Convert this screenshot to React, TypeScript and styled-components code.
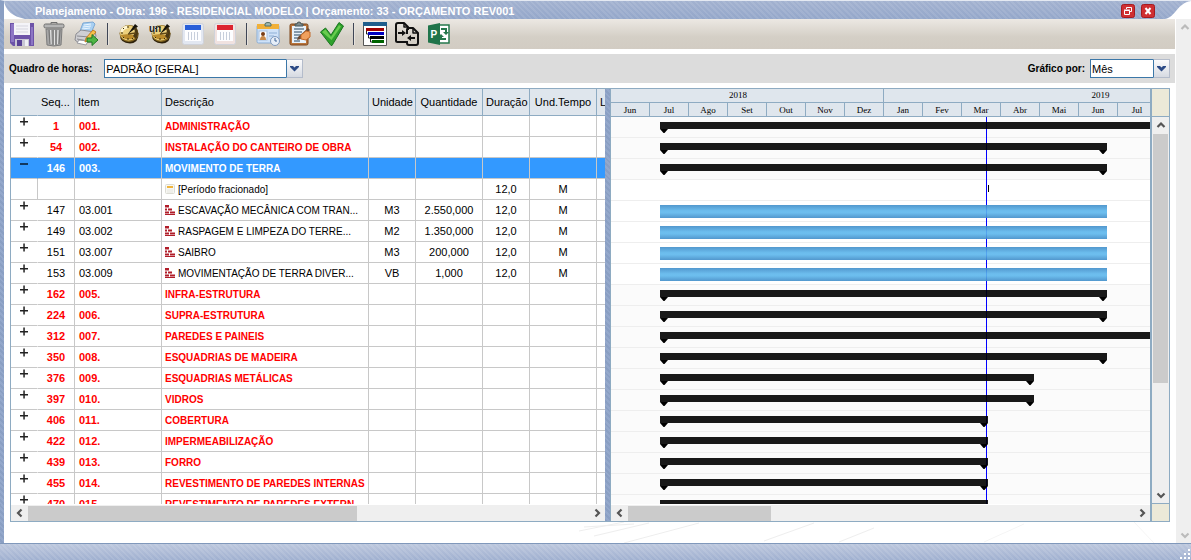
import React from "react";
import styled, { createGlobalStyle, css } from "styled-components";

const line = "#8eabc2";
const headerBg = "#dfe6ed";
const rule = "#c8c8c8";
const stripes = "repeating-linear-gradient(45deg, #8a9fc3 0 2px, #94a8cb 2px 4px)";

const Global = createGlobalStyle`
  * { box-sizing: border-box; }
  html, body { margin: 0; background: #fff; }
  body { font-family: "Liberation Sans", Arial, sans-serif; font-size: 11px; color: #000; }
  button { font: inherit; padding: 0; border: 0; background: none; cursor: pointer; }
  svg { display: block; }
`;

const Window = styled.div`
  display: flex;
  flex-direction: column;
  height: 100vh;
  min-height: 320px;
  overflow: hidden;
  background: #fff;
`;

const TitleBar = styled.header`
  flex: none;
  display: flex;
  align-items: stretch;
  height: 19px;
  border-top: 1px solid #e4e9f2;
  border-left: 4px solid #8a9fc3;
  background: repeating-linear-gradient(45deg, rgba(255, 255, 255, 0.09) 0 2px, transparent 2px 4px),
    linear-gradient(#a3b2d0, #94a7ca);
`;

const Title = styled.h1`
  flex: 1;
  margin: 0;
  padding: 2px 0 0 6px;
  font-size: 11px;
  line-height: 16px;
  font-weight: bold;
  color: #fff;
  white-space: nowrap;
`;

const WindowButtons = styled.div`
  display: flex;
  gap: 6px;
  padding: 3px 10px 0 0;
`;

const WindowButton = styled.button`
  width: 14px;
  height: 14px;
`;

const Main = styled.div`
  flex: 1;
  display: flex;
  min-height: 0;
  border-style: solid;
  border-width: 0 0 0 4px;
  border-image: ${stripes} 4;
`;

const Content = styled.main`
  position: relative;
  flex: 1;
  display: flex;
  flex-direction: column;
  min-width: 0;
  margin-right: 1px;
`;

const Toolbar = styled.div`
  flex: none;
  display: flex;
  align-items: center;
  height: 30px;
  padding-left: 2px;
  background: linear-gradient(#ece8e3, #d4cfc6 60%, #d2ccc3);
`;

const ToolButton = styled.button`
  display: flex;
  align-items: center;
  justify-content: center;
  width: 32px;
  height: 30px;
`;

const Separator = styled.span`
  width: 2px;
  height: 22px;
  margin: 0 4px 0 5px;
  background: linear-gradient(90deg, #3f4656 50%, #e6e2dc 50%);
`;

const FilterBar = styled.div`
  flex: none;
  display: flex;
  align-items: center;
  justify-content: space-between;
  height: 29px;
  margin-top: 5px;
  padding: 0 5px;
  background: #dcdcdc;
`;

const Field = styled.label`
  display: flex;
  align-items: center;
  gap: 12px;
  font-size: 10px;
  font-weight: bold;
`;

const ShortField = styled(Field)`
  gap: 5px;
`;

const Combo = styled.span<{ $width: number }>`
  display: grid;
  width: ${(p) => p.$width}px;
  height: 19px;
  > * { grid-area: 1 / 1; }
`;

const Select = styled.select`
  appearance: none;
  width: 100%;
  height: 19px;
  margin: 0;
  padding: 0 18px 0 1px;
  border: 1px solid #3b77a8;
  border-radius: 0;
  background: #fff;
  font-family: "Liberation Sans", Arial, sans-serif;
  font-size: 11px;
  color: #000;
`;

const ComboArrow = styled.span`
  justify-self: end;
  display: flex;
  align-items: center;
  justify-content: center;
  width: 17px;
  height: 19px;
  border: 1px solid #b4bccb;
  border-left-color: #3b77a8;
  background: linear-gradient(#fbfbfc, #d6dae2);
  pointer-events: none;
`;

const Workspace = styled.section`
  flex: 1;
  display: flex;
  min-height: 0;
  margin: 5px 5px 21px 6px;
  border: 1px solid ${line};
`;

const GridPane = styled.div`
  flex: none;
  display: flex;
  flex-direction: column;
  width: 594px;
  background: #fff;
`;

const Clip = styled.div`
  position: relative;
  flex: 1;
  min-height: 0;
  overflow: hidden;
`;

const Table = styled.table`
  width: 653px;
  table-layout: fixed;
  border-collapse: separate;
  border-spacing: 0;
`;

const Head = styled.th<{ $left?: boolean; $plain?: boolean }>`
  height: 27px;
  padding: 0 3px 1px;
  border-right: 1px solid ${(p) => (p.$plain ? headerBg : line)};
  border-bottom: 1px solid ${line};
  background: ${headerBg};
  font-size: 11px;
  font-weight: normal;
  text-align: ${(p) => (p.$left ? "left" : "center")};
  white-space: nowrap;
  overflow: hidden;
`;

type Kind = "group" | "selected" | "part" | "item";

const Row = styled.tr<{ $kind: Kind }>`
  ${(p) => p.$kind === "group" && css`color: #f00; font-weight: bold;`}
  ${(p) => p.$kind === "selected" && css`color: #fff; font-weight: bold; background: #39f;`}
`;

const Cell = styled.td<{ $left?: boolean; $plain?: boolean }>`
  height: 21px;
  padding: 0 3px 0 ${(p) => (p.$left ? 4 : 3)}px;
  border-right: 1px solid ${(p) => (p.$plain ? "transparent" : rule)};
  border-bottom: 1px solid ${rule};
  font-size: 11px;
  line-height: 20px;
  text-align: ${(p) => (p.$left ? "left" : "center")};
  white-space: nowrap;
  overflow: hidden;
`;

const NameCell = styled(Cell)`
  padding: 1px 3px 0;
  font-size: 10px;
  line-height: 19px;
  svg { display: inline-block; margin-right: 3px; vertical-align: -1px; }
`;

const Expander = styled.button`
  display: block;
  width: 9px;
  height: 9px;
  margin: 0 0 10px 6px;
`;

const Splitter = styled.div`
  flex: none;
  width: 6px;
  border-right: 1px solid ${line};
  background: ${stripes};
`;

const ChartPane = styled.div`
  flex: 1;
  display: flex;
  flex-direction: column;
  min-width: 0;
  font-family: "Liberation Serif", "Times New Roman", serif;
  font-size: 9px;
`;

const Scale = styled.div`
  flex: none;
  display: flex;
  height: 14px;
  overflow: hidden;
  border-bottom: 1px solid ${line};
  background: ${headerBg};
`;

const Year = styled.div<{ $width: number; $shift?: number }>`
  flex: none;
  width: ${(p) => p.$width}px;
  padding-right: ${(p) => p.$shift ?? 0}px;
  border-right: 1px solid ${line};
  line-height: 13px;
  text-align: center;
`;

const Month = styled.div`
  flex: none;
  width: 39px;
  border-right: 1px solid ${line};
  line-height: 14px;
  text-align: center;
`;

const ChartRow = styled.div<{ $shaded: boolean }>`
  height: 21px;
  padding-top: ${(p) => (p.$shaded ? 5 : 4)}px;
  padding-left: 49px;
  border-bottom: 1px solid #eee;
  background: ${(p) => (p.$shaded ? "#fbfbfb" : "#fff")};
  overflow: hidden;
`;

const SummaryBar = styled.div`
  position: relative;
  display: flex;
  justify-content: space-between;
  height: 7px;
  background: rgba(0, 0, 0, 0.9);
  z-index: 1;
  svg { flex: none; margin-top: 7px; }
`;

const TaskBar = styled.div`
  position: relative;
  height: 13px;
  background: linear-gradient(#3f8cc8, #5cb6ec 45%, #5cb6ec 60%, #3f8cc8);
  opacity: 0.9;
  z-index: 1;
`;

const Tick = styled.div`
  width: 1px;
  height: 7px;
  margin: 1px 0 0 328px;
  background: #000;
`;

const Today = styled.div`
  position: absolute;
  top: 0;
  bottom: 0;
  left: 375px;
  width: 1px;
  background: #00f;
`;

const HScroll = styled.div`
  flex: none;
  display: flex;
  align-items: center;
  height: 17px;
  border-top: 1px solid #fff;
  background: #efefef;
`;

const HThumb = styled.div<{ $width: number }>`
  width: ${(p) => p.$width}px;
  height: 15px;
  margin-right: auto;
  background: #cbcbcb;
`;

const ScrollArrow = styled.button`
  flex: none;
  display: flex;
  align-items: center;
  justify-content: center;
  width: 17px;
  height: 17px;
`;

const ScrollPane = styled.div`
  flex: none;
  display: flex;
  flex-direction: column;
  width: 19px;
  border-left: 2px solid ${line};
`;

const Corner = styled.div<{ $top?: boolean }>`
  flex: none;
  height: ${(p) => (p.$top ? 28 : 18)}px;
  border-${(p) => (p.$top ? "bottom" : "top")}: 1px solid ${line};
  background: #ece9d8;
`;

const VScroll = styled.div`
  flex: 1;
  display: flex;
  flex-direction: column;
  justify-content: space-between;
  min-height: 0;
  background: #efefef;
`;

const VThumb = styled.div`
  flex: 0 1 249px;
  margin: 0 1px auto;
  background: #cbcbcb;
`;

const PageScroll = styled.div`
  flex: none;
  display: flex;
  flex-direction: column;
  justify-content: space-between;
  width: 15px;
  background: #efefef;
`;

const StatusBar = styled.footer`
  flex: none;
  display: flex;
  align-items: flex-end;
  justify-content: flex-end;
  height: 17px;
  border-top: 1px solid #8098bb;
  background: repeating-linear-gradient(45deg, rgba(255, 255, 255, 0.1) 0 2px, transparent 2px 4px),
    linear-gradient(#bcc7dd, #a0b0d0);
`;

const Watermark = styled.svg`
  position: absolute;
  left: 560px;
  bottom: 0;
  pointer-events: none;
`;

const Chevron = ({ dir, color = "#555" }: { dir: "up" | "down" | "left" | "right"; color?: string }) => {
  const d = { up: "M1.5 6 5 2.5 8.5 6", down: "M1.5 3.5 5 7 8.5 3.5", left: "M6.5 1.5 3 5 6.5 8.5", right: "M3.5 1.5 7 5 3.5 8.5" }[dir];
  return (
    <svg width="10" height="10" viewBox="0 0 10 10" fill="none" stroke={color} strokeWidth="2.2"><path d={d} /></svg>
  );
};

const Notch = () => <svg width="8" height="4" viewBox="0 0 8 4"><path d="M0 0h8L4.500 4h-1z" fill="#000" /></svg>;

const Icon = ({ children, size = 26 }: { children: React.ReactNode; size?: number }) => (
  <svg width={size} height={size} viewBox="0 0 26 26">{children}</svg>
);

const SaveIcon = () => (
  <Icon>
    <path d="M1 2h24v23H4l-3-3z" fill="#6d53a8" />
    <path d="M2 3h3v18H2zM22 6h2v18h-2z" fill="#8d76c4" />
    <path d="M5 2h16v12H5z" fill="#f4f4f8" />
    <path d="M7 5h12M7 8h12M7 11h12" stroke="#d5d5de" />
    <path d="M6 18h14v7H6z" fill="#c9c6d4" />
    <path d="M8 19h5v6H8z" fill="#5a4296" />
    <path d="M16 19h3v6h-3z" fill="#efeff4" />
  </Icon>
);

const TrashIcon = () => (
  <Icon>
    <path d="M10 1.500h6v2h-6z" fill="none" stroke="#6f6f6f" />
    <rect x="3" y="3" width="20" height="4" rx="1.500" fill="#b5b5b5" stroke="#6f6f6f" />
    <path d="M5 8h16l-1 16q-7 2-14 0z" fill="#a6a6a6" stroke="#7b7b7b" />
    <path d="M8 9l1 14M12 9v15M15 9v15M19 9l-1 14" stroke="#777" strokeWidth="1.200" />
    <path d="M9.500 9l.7 14M13.500 9v15M17 9l-.5 14" stroke="#e2e2e2" />
  </Icon>
);

const PrintIcon = () => (
  <Icon>
    <path d="M10 2l10-1 2 2-4 9-11-2z" fill="#a9d0f2" stroke="#7ca8d4" />
    <path d="M11 4l7-1M10 6l8-1M9 8l8-1" stroke="#e9f5ff" />
    <path d="M3 13l5-4 14 2 1 4-3 6-14 1-4-3z" fill="#cfcfd3" stroke="#8c8c92" />
    <path d="M4 15l13 1 3-3M4 18l11 2" fill="none" stroke="#8a8a90" />
    <path d="M6 19l9 1-2 4-9-2z" fill="#fff" stroke="#9a9aa0" />
    <path d="M13 17l7-8 3 2-7 8-4 2z" fill="#f6c24a" stroke="#c57c22" />
    <path d="M14 17h5v-3.500l6 5.500-6 5.500V21h-5z" fill="#4fb545" stroke="#207a25" />
  </Icon>
);

const Clock = ({ tag }: { tag?: boolean }) => (
  <Icon>
    <path d="M4 14q0 8 10 8.500Q23 22 22.500 12z" fill="#2e210a" />
    <ellipse cx="13" cy="12.500" rx="9.500" ry="8.500" fill="#8a6a20" />
    <ellipse cx="12.500" cy="12" rx="8.500" ry="7.500" fill="#ecd07c" />
    <path d="M4.500 14a9 7 0 0 0 16 1l-8-2z" fill="#b98a2b" />
    <path d="M5.500 11a7 6 0 0 1 6-5" fill="none" stroke="#fff6d2" strokeWidth="3" />
    <path d="M5 12h2M12 5v2M12 19v-2M7 7l1 1M7 17l1-1M17 18l-1-1" stroke="#3a2a08" />
    <path d="M12 13L19 3l3 2.500z" fill="#15120a" />
    <path d="M20 6q4 6 0 12l-3-3q3-4 1-7z" fill="#4a3814" />
    <path d="M12 13l8-1" stroke="#5f4716" strokeWidth="1.500" />
    {tag && <text x="1" y="11" fontSize="10" fontWeight="bold" fontFamily="Liberation Sans" fill="#222">un</text>}
  </Icon>
);

const CalendarIcon = ({ color, tint }: { color: string; tint: string }) => (
  <Icon>
    <rect x="2.500" y="2.500" width="21" height="21" rx="2" fill={tint} stroke="#cfd2da" />
    <rect x="5" y="5" width="16" height="15" fill="#fdfdff" />
    <rect x="5" y="4" width="16" height="5" fill={color} />
    <path d="M5 9.500h16" stroke="#fff" />
    <path d="M8.500 11v8M11.500 11v8M14.500 11v8M17.500 11v8" stroke="#c7cedb" />
  </Icon>
);

const BadgeIcon = () => (
  <Icon>
    <rect x="2" y="4" width="22" height="18" rx="1.500" fill="#cfe2f8" stroke="#8aaed6" />
    <path d="M2 3h22v5H2z" fill="#f1b038" />
    <path d="M10 5V3q0-1.500 3-1.500T16 3v2z" fill="#9fb6ae" stroke="#4f6f68" />
    <rect x="4" y="10" width="8" height="9" fill="#fff" stroke="#a9c0dc" />
    <circle cx="8" cy="13" r="2" fill="#7a3d13" />
    <path d="M5 19q0-4 3-4t3 4z" fill="#c98a4a" />
    <path d="M14 12h8M14 15h5" stroke="#8fb0d6" />
    <circle cx="20" cy="20" r="4.500" fill="#e6eef8" stroke="#7d98bd" />
    <path d="M20 17v3h2" fill="none" stroke="#3f6596" />
  </Icon>
);

const ClipboardIcon = () => (
  <Icon>
    <rect x="3" y="3" width="18" height="21" rx="1.500" fill="#b9753c" stroke="#7d4518" />
    <path d="M5 5h14v17H5z" fill="#e8f2fb" />
    <path d="M8 5V3h2q0-2 2-2t2 2h2v2z" fill="#7d8a8c" stroke="#47565a" />
    <path d="M7 8h10M7 11h8M7 14h7M7 17h5M7 20h6" stroke="#22425f" strokeWidth="1.200" />
    <path d="M10 19l1-3 10-9 2 2-9 9z" fill="#6b4a33" />
    <path d="M14 14l5-4 4 1v5l-4 3-5-1z" fill="#f0a05e" stroke="#c46a2a" />
  </Icon>
);

const CheckIcon = () => (
  <Icon>
    <path d="M1.500 11l5-4 5.500 7L20 1.500l4.500 3.500L13 24.500h-1z" fill="#2fa12c" stroke="#1b7620" />
    <path d="M3 11l3.500-2.500L12 16l8-12 2 1.500L12.500 19z" fill="#68cc4e" />
  </Icon>
);

const GanttIcon = () => (
  <Icon>
    <path d="M1.500 2h23v22.500h-23z" fill="#fff" stroke="#555" />
    <path d="M1 1h24v4H1z" fill="#1f5d8c" />
    <path d="M4 7h18v3H4z" fill="#a00000" />
    <path d="M6 11h16v3H6z" fill="#0000c0" />
    <path d="M8 15h14v3H8z" fill="#000" />
    <path d="M10 19h12v3H10z" fill="#006400" />
    <path d="M4.500 10v3H6M6.500 14v3H8M8.500 18v3H10" fill="none" stroke="#222" />
  </Icon>
);

const MergeIcon = () => (
  <Icon>
    <g fill="none" stroke="#111" strokeWidth="2" strokeLinejoin="round">
      <path d="M12 21H3.500Q2 21 2 19.500V4q0-2 2-2h6l4 4v3" />
      <path d="M10 2v4h4" strokeWidth="1.500" />
      <path d="M13 13V9q0-2 2-2h4l5 5v10q0 2-2 2h-7q-2 0-2-2v-2" />
      <path d="M19 7v5h5" strokeWidth="1.500" />
      <path d="M4 12h5M21 17h-5" />
    </g>
    <path d="M8 9l4 3-4 3zM17 14l-4 3 4 3z" fill="#111" />
  </Icon>
);

const ProjectIcon = () => (
  <Icon>
    <path d="M12 4h11v18H12z" fill="#fff" stroke="#26784c" strokeWidth="1.500" />
    <path d="M15 8h5v4M20 18h-5v-3" fill="none" stroke="#26784c" strokeWidth="2" />
    <path d="M17 11h6l-3 3zM18 16h-6l3-3z" fill="#26784c" />
    <path d="M2 4.500L14 2v22L2 21.500z" fill="#20744a" />
    <text x="4.500" y="17" fontSize="10" fontWeight="bold" fontFamily="Liberation Sans" fill="#fff">P</text>
  </Icon>
);

const PeriodIcon = () => (
  <svg width="10" height="10" viewBox="0 0 10 10">
    <rect x="0.500" y="0.500" width="9" height="9" rx="1" fill="#f7f7f3" stroke="#dcdcd4" />
    <path d="M2 2h6v2H2z" fill="#f0b43c" />
    <path d="M2 6h6M2 8h6" stroke="#e6e6e0" />
  </svg>
);

const BricksIcon = () => (
  <svg width="10" height="10" viewBox="0 0 10 10">
    <path d="M0 0h4v2.500H0zM0 3.500h2v2H0zM3 3.500h4v2H3zM0 6.500h4v2H0zM5 6.500h5v2H5zM0 9h10v1H0z" fill="#b01c28" />
  </svg>
);

const toolGroups: { label: string; icon: React.ReactNode }[][] = [
  [
    { label: "Salvar", icon: <SaveIcon /> },
    { label: "Excluir", icon: <TrashIcon /> },
    { label: "Imprimir", icon: <PrintIcon /> },
  ],
  [
    { label: "Horas", icon: <Clock /> },
    { label: "Horas por unidade", icon: <Clock tag /> },
    { label: "Data inicial", icon: <CalendarIcon color="#2a5fd8" tint="#e2e7f1" /> },
    { label: "Data final", icon: <CalendarIcon color="#dc2430" tint="#f0e2e0" /> },
  ],
  [
    { label: "Recursos", icon: <BadgeIcon /> },
    { label: "Apontamentos", icon: <ClipboardIcon /> },
    { label: "Confirmar", icon: <CheckIcon /> },
  ],
  [
    { label: "Gantt", icon: <GanttIcon /> },
    { label: "Vincular", icon: <MergeIcon /> },
    { label: "Project", icon: <ProjectIcon /> },
  ],
];

type Task = { kind: Kind; seq?: string; code?: string; name: string; unit?: string; qty?: string; dur?: string; time?: string; length?: number };

const group = (seq: string, code: string, name: string, length: number): Task => ({ kind: "group", seq, code, name, length });
const item = (seq: string, code: string, name: string, unit: string, qty: string): Task => ({
  kind: "item", seq, code, name, unit, qty, dur: "12,0", time: "M", length: 447,
});

const tasks: Task[] = [
  group("1", "001.", "ADMINISTRAÇÃO", 620),
  group("54", "002.", "INSTALAÇÃO DO CANTEIRO DE OBRA", 447),
  { kind: "selected", seq: "146", code: "003.", name: "MOVIMENTO DE TERRA", length: 447 },
  { kind: "part", name: "[Período fracionado]", dur: "12,0", time: "M" },
  item("147", "03.001", "ESCAVAÇÃO MECÂNICA COM TRAN...", "M3", "2.550,000"),
  item("149", "03.002", "RASPAGEM E LIMPEZA DO TERRE...", "M2", "1.350,000"),
  item("151", "03.007", "SAIBRO", "M3", "200,000"),
  item("153", "03.009", "MOVIMENTAÇÃO DE TERRA DIVER...", "VB", "1,000"),
  group("162", "005.", "INFRA-ESTRUTURA", 447),
  group("224", "006.", "SUPRA-ESTRUTURA", 447),
  group("312", "007.", "PAREDES E PAINEIS", 620),
  group("350", "008.", "ESQUADRIAS DE MADEIRA", 447),
  group("376", "009.", "ESQUADRIAS METÁLICAS", 374),
  group("397", "010.", "VIDROS", 374),
  group("406", "011.", "COBERTURA", 328),
  group("422", "012.", "IMPERMEABILIZAÇÃO", 328),
  group("439", "013.", "FORRO", 328),
  group("455", "014.", "REVESTIMENTO DE PAREDES INTERNAS", 328),
  group("470", "015.", "REVESTIMENTO DE PAREDES EXTERN...", 328),
];

const columns = [27, 37, 87, 207, 47, 67, 47, 67, 67];
const months = ["Jun", "Jul", "Ago", "Set", "Out", "Nov", "Dez", "Jan", "Fev", "Mar", "Abr", "Mai", "Jun", "Jul"];

const TaskRow = ({ task }: { task: Task }) => {
  const open = task.kind === "selected";
  return (
    <Row $kind={task.kind}>
      <Cell $plain={task.kind !== "part"}>
        {task.kind !== "part" && (
          <Expander aria-label={open ? "Recolher" : "Expandir"}>
            <svg width="9" height="9" viewBox="0 0 9 9">
              <path d={open ? "M0 4h8v2H0z" : "M0 4h8v1.500H0zM3.300 0.500h1.500v8H3.300z"} fill={open ? "#12385f" : "#222"} />
            </svg>
          </Expander>
        )}
      </Cell>
      <Cell>{task.seq}</Cell>
      <Cell $left>{task.code}</Cell>
      <NameCell $left>
        {task.kind === "part" && <PeriodIcon />}
        {task.kind === "item" && <BricksIcon />}
        {task.name}
      </NameCell>
      <Cell>{task.unit}</Cell>
      <Cell>{task.qty}</Cell>
      <Cell>{task.dur}</Cell>
      <Cell>{task.time}</Cell>
      <Cell />
    </Row>
  );
};

const TaskTrack = ({ task }: { task: Task }) => {
  const summary = task.kind === "group" || task.kind === "selected";
  return (
    <ChartRow $shaded={summary}>
      {summary && <SummaryBar style={{ width: task.length }}><Notch /><Notch /></SummaryBar>}
      {task.kind === "item" && <TaskBar style={{ width: task.length }} />}
      {task.kind === "part" && <Tick />}
    </ChartRow>
  );
};

const HorizontalScroll = ({ thumb }: { thumb: number }) => (
  <HScroll>
    <ScrollArrow aria-label="Rolar para a esquerda"><Chevron dir="left" /></ScrollArrow>
    <HThumb $width={thumb} />
    <ScrollArrow aria-label="Rolar para a direita"><Chevron dir="right" /></ScrollArrow>
  </HScroll>
);

const ComboBox = ({ width, value, id }: { width: number; value: string; id: string }) => (
  <Combo $width={width}>
    <Select id={id} defaultValue={value}><option>{value}</option></Select>
    <ComboArrow><svg width="9" height="6" viewBox="0 0 9 6"><path d="M0 0h3l1.500 1.500L6 0h3v1L4.500 5.500 0 1z" fill="#2b4a86" /></svg></ComboArrow>
  </Combo>
);

export default function App() {
  return (
    <>
      <Global />
      <Window>
        <TitleBar>
          <svg width="25" height="18" viewBox="0 0 25 18"><path d="M0 0q2 14 21 18H0z" fill="#fff" /></svg>
          <Title>Planejamento - Obra: 196 - RESIDENCIAL MODELO | Orçamento: 33 - ORÇAMENTO REV001</Title>
          <WindowButtons>
            <WindowButton aria-label="Restaurar">
              <svg width="14" height="14" viewBox="0 0 14 14">
                <rect x="0.500" y="0.500" width="13" height="13" rx="2" fill="#cf2f32" stroke="#a51a20" />
                <path d="M5.500 5V3.500h5v4H9M3.500 6.500h5v4h-5zM3 6h6" fill="none" stroke="#fff" />
              </svg>
            </WindowButton>
            <WindowButton aria-label="Fechar">
              <svg width="14" height="14" viewBox="0 0 14 14">
                <rect x="0.500" y="0.500" width="13" height="13" rx="2" fill="#cf2f32" stroke="#a51a20" />
                <path d="M4.500 4l5 6M9.500 4l-5 6" stroke="#fff" strokeWidth="2" />
              </svg>
            </WindowButton>
          </WindowButtons>
          <svg width="26" height="18" viewBox="0 0 26 18"><path d="M0 18C11 16 12 2 26 0v18z" fill="#fff" /></svg>
        </TitleBar>
        <Main>
          <Content>
            <Watermark width="600" height="21" viewBox="0 0 600 21" fill="none" stroke="#eee">
              <path d="M15 9l45-9M30 14L85 1M60 21l75-20M200 19l50-18M275 20l35-14M20 5l50-3" />
              <path d="M570 0l20 21M420 20l40-18" stroke="#f5f5f5" />
            </Watermark>
            <Toolbar role="toolbar">
              {toolGroups.map((tools, i) => (
                <React.Fragment key={i}>
                  {i > 0 && <Separator />}
                  {tools.map((t) => <ToolButton key={t.label} aria-label={t.label}>{t.icon}</ToolButton>)}
                </React.Fragment>
              ))}
            </Toolbar>
            <FilterBar>
              <Field htmlFor="hours">Quadro de horas:<ComboBox id="hours" width={199} value="PADRÃO [GERAL]" /></Field>
              <ShortField htmlFor="period">Gráfico por:<ComboBox id="period" width={80} value="Mês" /></ShortField>
            </FilterBar>
            <Workspace>
              <GridPane>
                <Clip>
                  <Table>
                    <colgroup>{columns.map((w, i) => <col key={i} style={{ width: w }} />)}</colgroup>
                    <thead>
                      <tr>
                        <Head $plain />
                        <Head $left>Seq...</Head>
                        <Head $left>Item</Head>
                        <Head $left>Descrição</Head>
                        <Head>Unidade</Head>
                        <Head>Quantidade</Head>
                        <Head>Duração</Head>
                        <Head>Und.Tempo</Head>
                        <Head $left>L</Head>
                      </tr>
                    </thead>
                    <tbody>{tasks.map((t) => <TaskRow key={t.name} task={t} />)}</tbody>
                  </Table>
                </Clip>
                <HorizontalScroll thumb={329} />
              </GridPane>
              <Splitter />
              <ChartPane>
                <Scale>
                  <Year $width={273} $shift={18}>2018</Year>
                  <Year $width={434}>2019</Year>
                </Scale>
                <Scale>{months.map((m, i) => <Month key={i}>{m}</Month>)}</Scale>
                <Clip>
                  <Today />
                  {tasks.map((t) => <TaskTrack key={t.name} task={t} />)}
                </Clip>
                <HorizontalScroll thumb={143} />
              </ChartPane>
              <ScrollPane>
                <Corner $top />
                <VScroll>
                  <ScrollArrow aria-label="Rolar para cima"><Chevron dir="up" /></ScrollArrow>
                  <VThumb />
                  <ScrollArrow aria-label="Rolar para baixo"><Chevron dir="down" /></ScrollArrow>
                </VScroll>
                <Corner />
              </ScrollPane>
            </Workspace>
          </Content>
          <PageScroll>
            <ScrollArrow aria-label="Página acima"><Chevron dir="up" color="#bbb" /></ScrollArrow>
            <ScrollArrow aria-label="Página abaixo"><Chevron dir="down" color="#bbb" /></ScrollArrow>
          </PageScroll>
        </Main>
        <StatusBar>
          <svg width="12" height="12" viewBox="0 0 12 12"><path d="M9 1h2v2H9zM5 5h2v2H5zM9 5h2v2H9zM1 9h2v2H1zM5 9h2v2H5zM9 9h2v2H9z" fill="#fff" /></svg>
        </StatusBar>
      </Window>
    </>
  );
}
